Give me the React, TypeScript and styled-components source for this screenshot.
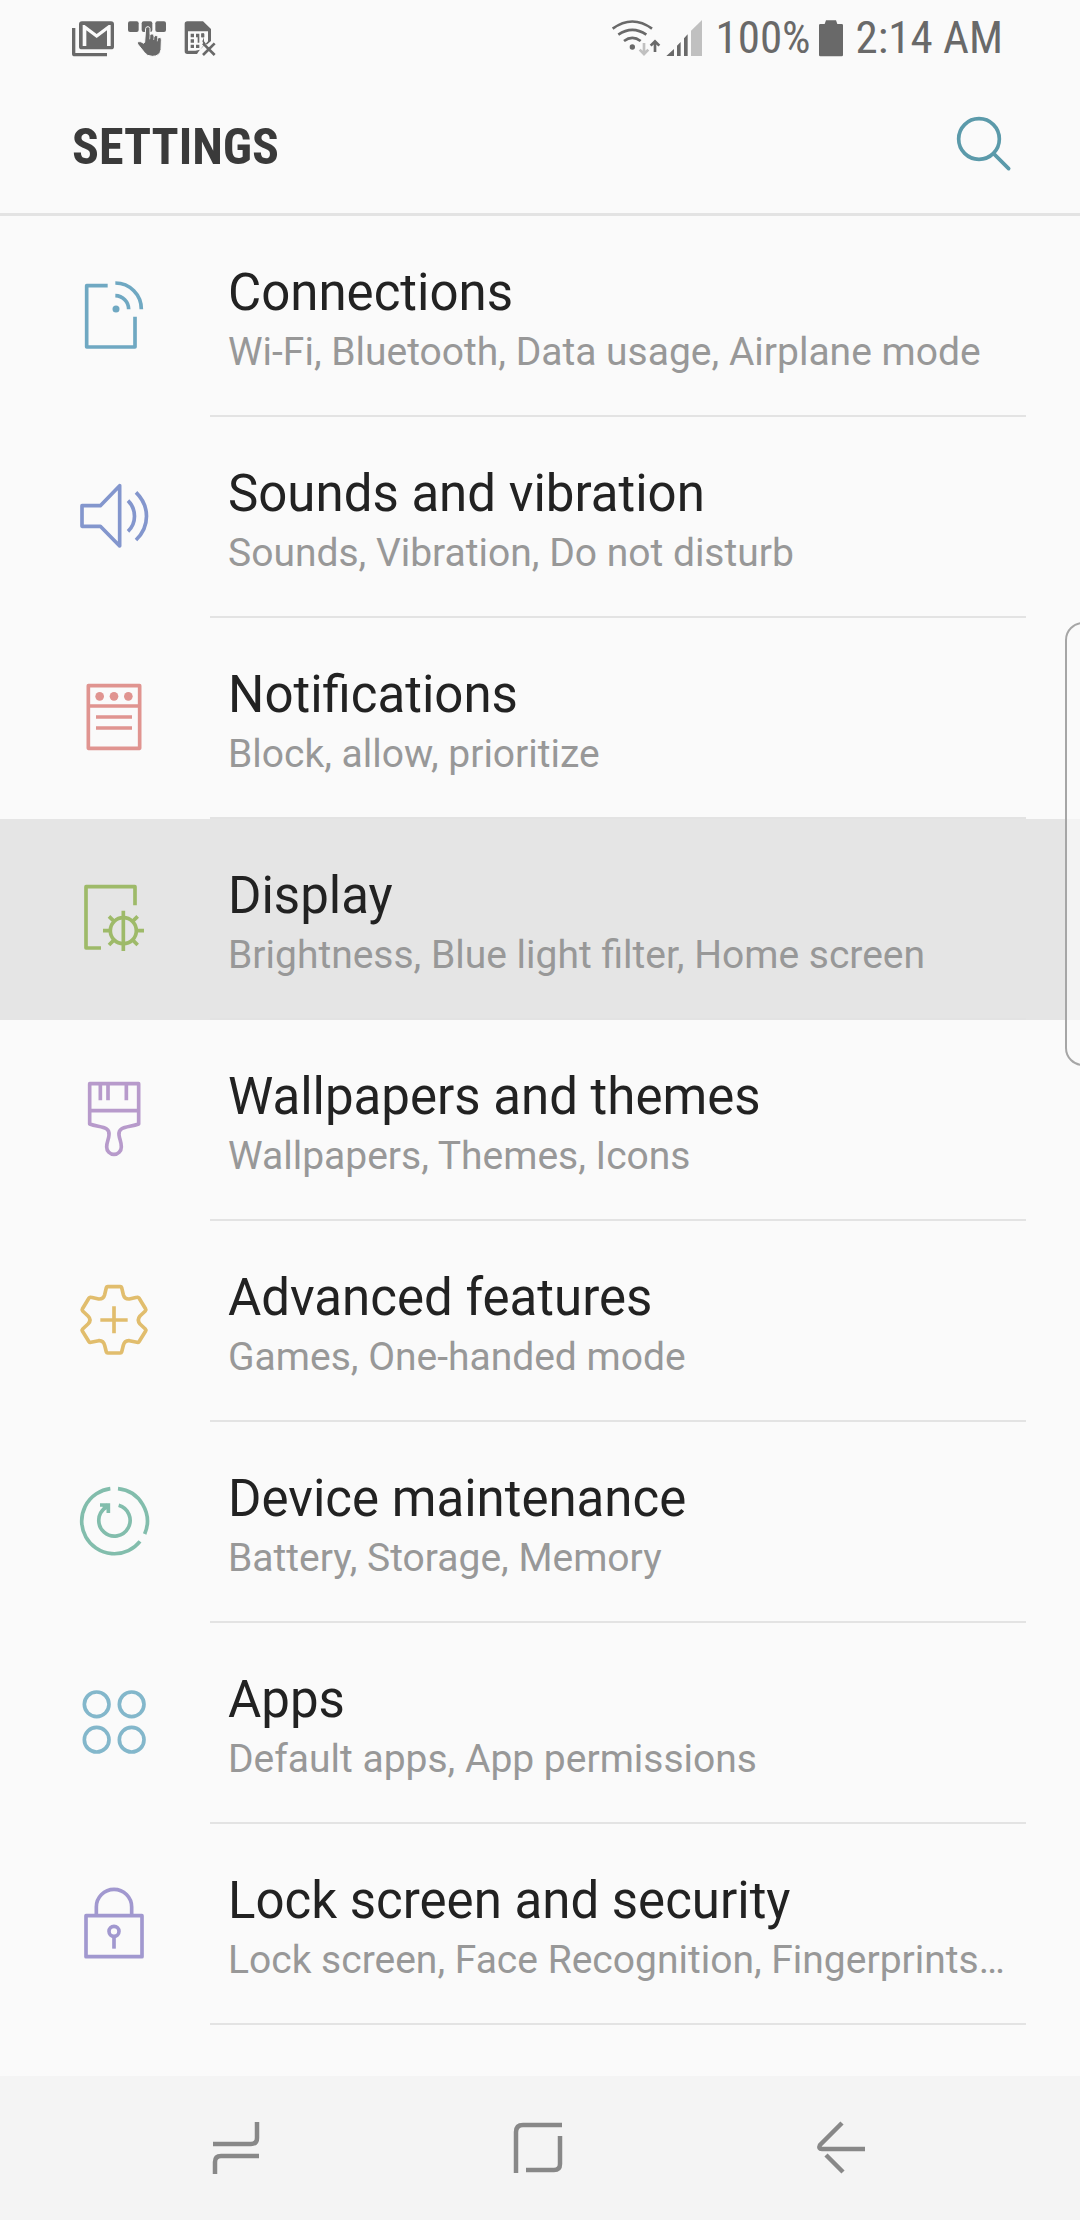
import React from "react";
import styled, { createGlobalStyle } from "styled-components";

const colors = {
  page: "#fafafa",
  line: "#e3e3e3",
  pressed: "#e5e5e5",
  navBar: "#f4f4f4",
  navIcon: "#888888",
  status: "#696969",
  statusFaint: "#c0c0c0",
  heading: "#3a3a3a",
  title: "#222222",
  subtitle: "#989898",
  accent: "#5b9aaa",
};

const GlobalStyle = createGlobalStyle`
  *, *::before, *::after { box-sizing: border-box; }
  body { margin: 0; background: ${colors.page}; }
  button { border: 0; padding: 0; background: none; cursor: pointer; }
`;

const Screen = styled.div`
  position: relative;
  display: flex;
  flex-direction: column;
  min-height: 100vh;
  overflow: hidden;
  background: ${colors.page};
  font-family: Roboto, "Liberation Sans", sans-serif;
`;

const StatusBar = styled.div`
  display: flex;
  justify-content: space-between;
  align-items: center;
  height: 76px;
  padding: 0 77px 0 72px;
  color: ${colors.status};
`;

const Notices = styled.div`
  display: flex;
  gap: 13px;
`;

const SystemState = styled.div`
  display: flex;
  align-items: center;
  gap: 13px;
`;

const BatteryState = styled.div`
  display: flex;
  align-items: center;
  gap: 8px;
`;

const SignalGroup = styled.div`
  display: flex;
  gap: 5px;
`;

const StatusText = styled.span`
  font-family: "Roboto Condensed", "Liberation Sans Narrow", Roboto, sans-serif;
  font-size: 45px;
  line-height: 60px;
  white-space: nowrap;
`;

const Header = styled.header`
  display: flex;
  justify-content: space-between;
  align-items: center;
  height: 140px;
  padding: 0 68px 2px 72px;
  border-bottom: 3px solid ${colors.line};
`;

const Heading = styled.h1`
  margin: 0;
  padding-top: 6px;
  color: ${colors.heading};
  font-family: "Roboto Condensed", "Liberation Sans Narrow", Roboto, sans-serif;
  font-size: 50px;
  font-weight: 700;
  line-height: 60px;
`;

const SearchButton = styled.button`
  display: flex;
  color: ${colors.accent};
`;

const List = styled.ul`
  flex: 1;
  margin: 0;
  padding: 0 0 51px;
  list-style: none;
`;

const Row = styled.li<{ $pressed?: boolean }>`
  background: ${(p) => (p.$pressed ? colors.pressed : "transparent")};

  &::after {
    content: "";
    display: block;
    height: 2px;
    margin: 0 54px 0 210px;
    background: ${colors.line};
  }
`;

const RowLink = styled.a`
  display: flex;
  gap: 48px;
  height: 199px;
  padding: 40px 54px 0 60px;
  color: inherit;
  text-decoration: none;
`;

const RowText = styled.span`
  display: flex;
  flex-direction: column;
  gap: 5px;
  padding-top: 7px;
  white-space: nowrap;
`;

const Title = styled.span`
  color: ${colors.title};
  font-size: 51px;
  line-height: 60px;
`;

const Subtitle = styled.span`
  color: ${colors.subtitle};
  font-size: 39px;
  line-height: 48px;
`;

const EdgeHandle = styled.div`
  position: absolute;
  top: 622px;
  right: -21px;
  width: 36px;
  height: 444px;
  border: 2px solid #a6a6a6;
  border-radius: 24px;
  background: rgba(250, 250, 250, 0.65);
`;

const NavBar = styled.nav`
  display: flex;
  justify-content: space-between;
  align-items: center;
  height: 144px;
  padding: 0 206px;
  background: ${colors.navBar};
`;

const NavButton = styled.button`
  display: flex;
  color: ${colors.navIcon};
`;

const Glyph = styled.svg`
  display: block;
  flex: none;
  overflow: visible;
`;

/* Line drawings are made on a grid of three units to the pixel. */
const RowGlyph = ({ color, top, children }: { color: string; top: number; children: React.ReactNode }) => (
  <Glyph
    width={120}
    height={120}
    viewBox={`0 ${top} 360 360`}
    fill="none"
    stroke={color}
    strokeWidth={11}
    strokeLinejoin="round"
    aria-hidden="true"
  >
    {children}
  </Glyph>
);

const items = [
  {
    title: "Connections",
    subtitle: "Wi-Fi, Bluetooth, Data usage, Airplane mode",
    icon: (
      <RowGlyph color="#6fa8c2" top={18}>
        <path d="M143 107H80V291H225V200" />
        <path d="M166 99A78 78 0 0 1 244 178M166 137A41 41 0 0 1 206 178" />
        <circle cx="168" cy="177" r="10.500" fill="#6fa8c2" stroke="none" />
      </RowGlyph>
    ),
  },
  {
    title: "Sounds and vibration",
    subtitle: "Sounds, Vibration, Do not disturb",
    icon: (
      <RowGlyph color="#8396cd" top={-9}>
        <path d="M66 137H121L179 77V258L121 199H66Z" />
        <path d="M204 122C230 148 230 190 204 214M228 97C270 138 270 200 228 240" />
      </RowGlyph>
    ),
  },
  {
    title: "Notifications",
    subtitle: "Block, allow, prioritize",
    icon: (
      <RowGlyph color="#e09490" top={-6}>
        <path d="M85 77H239V265H85ZM85 138H239M108 171H216M108 204H216" />
        <g fill="#e09490" stroke="none">
          <circle cx="119" cy="109" r="13" />
          <circle cx="162" cy="109" r="13" />
          <circle cx="205" cy="109" r="13" />
        </g>
      </RowGlyph>
    ),
  },
  {
    title: "Display",
    subtitle: "Brightness, Blue light filter, Home screen",
    pressed: true,
    icon: (
      <RowGlyph color="#9eba69" top={-3}>
        <path d="M123 264H78V80H225V136" />
        <circle cx="190" cy="212" r="39" />
        <path d="M190 152V273M129 212H151M229 212H252M147 169L163 185M233 169L217 185M147 255L163 239M233 255L217 239" />
      </RowGlyph>
    ),
  },
  {
    title: "Wallpapers and themes",
    subtitle: "Wallpapers, Themes, Icons",
    icon: (
      <RowGlyph color="#b79acb" top={0}>
        <path d="M89 71H236V192C205 203 174 198 177 225C179 240 184 245 184 261A22 22 0 0 1 140 261C140 245 146 240 147 225C150 198 120 203 89 192Z" />
        <path d="M89 152H236M121 71V121M144 71V121M199 71V121" />
      </RowGlyph>
    ),
  },
  {
    title: "Advanced features",
    subtitle: "Games, One-handed mode",
    icon: (
      <RowGlyph color="#e1bd6d" top={3}>
        <path d="M139 83Q140 80 143 80H181Q184 80 185 83L190 104Q194 118 208 117L231 112Q235 111 237 114L257 147Q259 150 256 153L240 168Q230 180 240 192L256 207Q259 210 257 213L237 245Q235 248 231 247L208 242Q194 241 190 256L185 276Q184 279 181 279H143Q140 279 139 276L134 256Q130 241 116 242L93 247Q89 248 87 245L67 213Q65 210 68 207L84 192Q96 180 84 168L68 153Q65 150 67 147L87 114Q89 111 93 112L116 117Q130 118 134 104Z" />
        <path d="M121 180H203M162 139V220" />
      </RowGlyph>
    ),
  },
  {
    title: "Device maintenance",
    subtitle: "Battery, Storage, Memory",
    icon: (
      <RowGlyph color="#82bdac" top={6}>
        <path d="M151 86A98 98 0 1 0 240 244M174 86A98 98 0 0 1 254 222" />
        <path d="M176 136A47 47 0 1 1 136 143L144 134" />
        <path d="M120 135H145V159M128 142H140" strokeLinejoin="miter" />
      </RowGlyph>
    ),
  },
  {
    title: "Apps",
    subtitle: "Default apps, App permissions",
    icon: (
      <RowGlyph color="#83b7cb" top={9}>
        <circle cx="110" cy="133" r="37" />
        <circle cx="215" cy="133" r="37" />
        <circle cx="110" cy="239" r="37" />
        <circle cx="215" cy="239" r="37" />
      </RowGlyph>
    ),
  },
  {
    title: "Lock screen and security",
    subtitle: "Lock screen, Face Recognition, Fingerprints…",
    icon: (
      <RowGlyph color="#a198cf" top={12}>
        <path d="M78 167H246V290H78ZM109 167V141A53 53 0 0 1 215 141V167" />
        <circle cx="162" cy="214" r="15" />
        <path d="M162 229V266" />
      </RowGlyph>
    ),
  },
];

const MailGlyph = () => (
  <Glyph width={42} height={37} viewBox="66 54 126 111" fill="currentColor" aria-hidden="true">
    <path d="M66 78H76V153H171V163H74Q66 163 66 155Z" />
    <path
      fillRule="evenodd"
      d="M96 58H183Q192 58 192 67V134Q192 142 183 142H96Q87 142 87 134V67Q87 58 96 58ZM98 69V132H109V85L140 108L171 85V132H182V69H176L140 96L104 69Z"
    />
  </Glyph>
);

const TouchGlyph = () => (
  <Glyph width={40} height={37} viewBox="231 54 120 111" fill="currentColor" aria-hidden="true">
    <rect x="234" y="58" width="32" height="32" rx="6" />
    <rect x="275" y="58" width="32" height="32" rx="6" />
    <rect x="316" y="58" width="32" height="32" rx="6" />
    <path
      stroke={colors.page}
      strokeWidth="3"
      d="M287 79Q288 74 294 74Q300 75 300 80V98Q302 95 307 96Q313 97 312 104Q315 99 321 101Q325 103 323 109Q327 105 331 107Q335 109 334 116L333 143Q329 163 307 163Q291 163 283 151L263 126Q260 121 266 119Q272 117 281 124L284 121Z"
    />
    <path stroke={colors.page} strokeWidth="2" fill="none" d="M300 98L299 112M312 104L311 114M323 109L322 118" />
  </Glyph>
);

const SimGlyph = () => (
  <Glyph width={37} height={37} viewBox="390 54 111 111" fill="currentColor" aria-hidden="true">
    <path
      fillRule="evenodd"
      d="M412 58H459L483 81V117L470 128L462 118V94H454V106H462L457 118L462 128L447 147L441 156H412Q404 156 404 148V66Q404 58 412 58ZM414 88V146H436L450 143L458 135L474 118V88Z"
    />
    <path d="M422 95H432V106H422ZM422 112H432V122H422ZM422 128H432V138H422ZM438 95H448V122H443V106H438ZM438 128H448V138H438ZM454 95H463V106H454Z" />
    <path d="M459 124L494 159M494 124L459 159" stroke="currentColor" strokeWidth="8" />
  </Glyph>
);

const WifiGlyph = () => (
  <Glyph width={50} height={38} viewBox="63 54 150 114" fill="none" stroke="currentColor" strokeWidth="8" role="img" aria-label="Wi-Fi connected">
    <path d="M68 83Q127 40 186 83M85 101Q127 72 169 101M102 120Q127 101 152 120" />
    <circle cx="127" cy="138" r="8" fill="currentColor" stroke="none" />
    <path d="M162 126V158M149 146L162 159L175 146" stroke={colors.statusFaint} />
    <path d="M195 153V122M182 134L195 121L208 134" />
  </Glyph>
);

const SignalGlyph = () => (
  <Glyph width={36} height={38} viewBox="228 54 108 114" fill="currentColor" role="img" aria-label="Mobile signal">
    <path d="M229 165L252 144V165ZM261 134L272 123V165H261ZM282 112L293 100V165H282Z" />
    <path d="M303 89L336 57V165H303Z" fill={colors.statusFaint} />
  </Glyph>
);

const BatteryGlyph = () => (
  <Glyph width={24} height={37} viewBox="687 56 72 111" fill="currentColor" role="img" aria-label="Battery full">
    <path d="M708 57H738L742 68H755Q759 68 759 72V161Q759 165 755 165H691Q687 165 687 161V72Q687 68 691 68H704Z" />
  </Glyph>
);

export default function App() {
  return (
    <Screen>
      <GlobalStyle />
      <StatusBar>
        <Notices>
          <MailGlyph />
          <TouchGlyph />
          <SimGlyph />
        </Notices>
        <SystemState>
          <SignalGroup>
            <WifiGlyph />
            <SignalGlyph />
          </SignalGroup>
          <BatteryState>
            <StatusText>100%</StatusText>
            <BatteryGlyph />
          </BatteryState>
          <StatusText>2:14 AM</StatusText>
        </SystemState>
      </StatusBar>
      <Header>
        <Heading>SETTINGS</Heading>
        <SearchButton type="button" aria-label="Search">
          <Glyph width={57} height={57} viewBox="1095 345 171 171" fill="none" stroke="currentColor" strokeWidth="11">
            <circle cx="1167" cy="417" r="61" />
            <path d="M1211 461L1256 506" strokeLinecap="round" />
          </Glyph>
        </SearchButton>
      </Header>
      <List>
        {items.map((item) => (
          <Row key={item.title} $pressed={item.pressed}>
            <RowLink href="#">
              {item.icon}
              <RowText>
                <Title>{item.title}</Title>
                <Subtitle>{item.subtitle}</Subtitle>
              </RowText>
            </RowLink>
          </Row>
        ))}
      </List>
      <EdgeHandle />
      <NavBar>
        <NavButton type="button" aria-label="Recent apps">
          <Glyph width={60} height={60} viewBox="0 0 60 60" fill="none" stroke="currentColor" strokeWidth="4.500">
            <path d="M7 26H45Q51 26 51 20V4M53 38H15Q9 38 9 44V56" />
          </Glyph>
        </NavButton>
        <NavButton type="button" aria-label="Home">
          <Glyph width={60} height={60} viewBox="0 0 60 60" fill="none" stroke="currentColor" strokeWidth="4.500">
            <path d="M52 7H13Q6 7 6 14V55M16 52H44Q50 52 50 46V18" />
          </Glyph>
        </NavButton>
        <NavButton type="button" aria-label="Back">
          <Glyph width={60} height={60} viewBox="0 0 60 60" fill="none" stroke="currentColor" strokeWidth="4.500">
            <path d="M28 5L6 27Q4 31 8 31H51M12 37L29 54" />
          </Glyph>
        </NavButton>
      </NavBar>
    </Screen>
  );
}
